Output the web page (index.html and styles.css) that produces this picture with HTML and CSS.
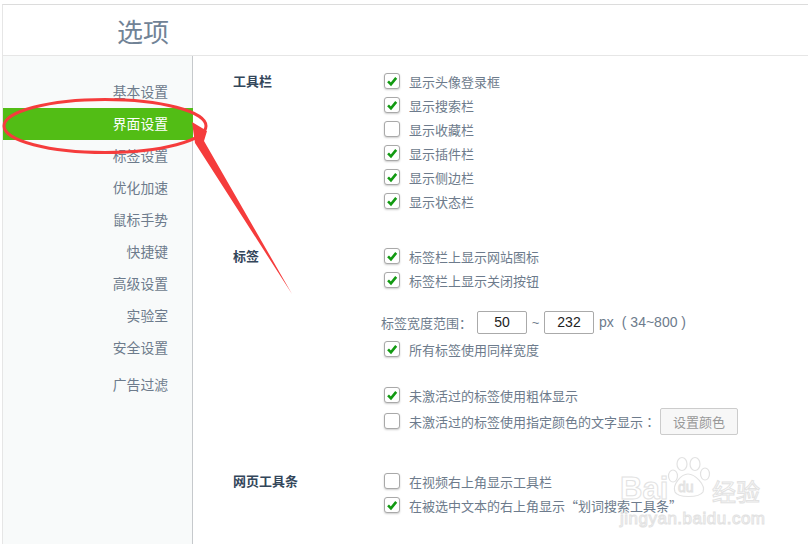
FILE: index.html
```html
<!DOCTYPE html>
<html lang="zh-CN">
<head>
  <meta charset="UTF-8">
  <title>选项</title>
  <link rel="stylesheet" href="styles.css">
</head>
<body>
  <div class="outer">
    <div class="header">
      <h1>选项</h1>
    </div>
    <div class="content">
      <div class="side">
        <div class="item">基本设置</div>
        <div class="item active">界面设置</div>
        <div class="item">标签设置</div>
        <div class="item">优化加速</div>
        <div class="item">鼠标手势</div>
        <div class="item">快捷键</div>
        <div class="item">高级设置</div>
        <div class="item">实验室</div>
        <div class="item">安全设置</div>
        <div class="item last">广告过滤</div>
      </div>
      <div class="main">
        <div class="section">
          <div class="title">工具栏</div>
          <div class="rows">
            <div class="row"><span class="box on"><svg viewBox="0 0 16 16"><path d="M3.5 8.5 6.8 11.8 12.8 4.5"/></svg></span>显示头像登录框</div>
            <div class="row"><span class="box on"><svg viewBox="0 0 16 16"><path d="M3.5 8.5 6.8 11.8 12.8 4.5"/></svg></span>显示搜索栏</div>
            <div class="row"><span class="box"></span>显示收藏栏</div>
            <div class="row"><span class="box on"><svg viewBox="0 0 16 16"><path d="M3.5 8.5 6.8 11.8 12.8 4.5"/></svg></span>显示插件栏</div>
            <div class="row"><span class="box on"><svg viewBox="0 0 16 16"><path d="M3.5 8.5 6.8 11.8 12.8 4.5"/></svg></span>显示侧边栏</div>
            <div class="row"><span class="box on"><svg viewBox="0 0 16 16"><path d="M3.5 8.5 6.8 11.8 12.8 4.5"/></svg></span>显示状态栏</div>
          </div>
        </div>
        <div class="section tabs">
          <div class="title">标签</div>
          <div class="rows">
            <div class="row"><span class="box on"><svg viewBox="0 0 16 16"><path d="M3.5 8.5 6.8 11.8 12.8 4.5"/></svg></span>标签栏上显示网站图标</div>
            <div class="row"><span class="box on"><svg viewBox="0 0 16 16"><path d="M3.5 8.5 6.8 11.8 12.8 4.5"/></svg></span>标签栏上显示关闭按钮</div>
            <div class="width-row">
              <span class="width-label">标签宽度范围<span class="colon">：</span></span>
              <span class="num">50</span>
              <span class="tilde">~</span>
              <span class="num">232</span>
              <span class="unit">px</span>
              <span class="range">( 34~800 )</span>
            </div>
            <div class="row"><span class="box on"><svg viewBox="0 0 16 16"><path d="M3.5 8.5 6.8 11.8 12.8 4.5"/></svg></span>所有标签使用同样宽度</div>
            <div class="row push"><span class="box on"><svg viewBox="0 0 16 16"><path d="M3.5 8.5 6.8 11.8 12.8 4.5"/></svg></span>未激活过的标签使用粗体显示</div>
            <div class="row color-row"><span class="box"></span>未激活过的标签使用指定颜色的文字显示<span class="colon">：</span><span class="btn">设置颜色</span></div>
          </div>
        </div>
        <div class="section bar">
          <div class="title">网页工具条</div>
          <div class="rows">
            <div class="row"><span class="box"></span>在视频右上角显示工具栏</div>
            <div class="row"><span class="box on"><svg viewBox="0 0 16 16"><path d="M3.5 8.5 6.8 11.8 12.8 4.5"/></svg></span>在被选中文本的右上角显示“划词搜索工具条”</div>
          </div>
        </div>
      </div>
    </div>
  </div>

  <!-- red marks drawn over the screenshot -->
  <svg class="marks" width="808" height="544" viewBox="0 0 808 544">
    <ellipse cx="105" cy="126" rx="101" ry="26.500" fill="none" stroke="#f53c3c" stroke-width="3"/>
    <path d="M192 122 207 131 204 141 292 294 195 143 Z" fill="#f53c3c"/>
  </svg>

  <div class="mark">
    <svg class="paw" viewBox="0 0 44 44" width="44" height="44">
      <ellipse cx="6" cy="20" rx="4.500" ry="6"/>
      <ellipse cx="15" cy="8" rx="5" ry="6.500"/>
      <ellipse cx="28" cy="8" rx="5" ry="6.500"/>
      <ellipse cx="38" cy="18" rx="4.500" ry="6"/>
      <path d="M21 18C14 18 5 29 8 36 11 42 32 42 36 36 39 29 28 18 21 18Z"/>
    </svg>
    <span class="bai">Bai</span><span class="du">du</span><span class="jy">经验</span>
    <div class="url">jingyan.baidu.com</div>
  </div>
</body>
</html>
```

FILE: styles.css
```css
* {
  box-sizing: border-box;
}

html, body {
  margin: 0;
  height: 100%;
  background: #fff;
  overflow: hidden;
}

body {
  font-family: "Noto Sans CJK SC", "Liberation Sans", sans-serif;
  font-size: 13px;
  color: #6d7b8c;
}

.outer {
  height: 544px;
  margin: 4px 0 0 2px;
  border-top: 1px solid #dcdcdc;
  border-left: 1px solid #e6e6e6;
  display: flex;
  flex-direction: column;
}

.header {
  height: 51px;
  flex: none;
  border-bottom: 1px solid #e6e6e6;
  padding-left: 114px;
}

.header h1 {
  margin: 0;
  font-size: 26px;
  font-weight: 400;
  line-height: 51px;
  color: #718396;
}

.content {
  display: flex;
  flex: 1;
}

.side {
  width: 190px;
  flex: none;
  padding-top: 20px;
  background: #f8fafa;
  border-right: 1px solid #c6c9cc;
}

.item {
  height: 32px;
  line-height: 30px;
  padding-right: 24px;
  text-align: right;
  font-size: 13.800px;
  color: #6d7b8c;
}

.item.active {
  background: #52bd15;
  color: #fff;
  margin-right: -1px;
  padding-right: 25px;
}

.item.last {
  margin-top: 5px;
}

.main {
  flex: 1;
  padding: 13px 0 0 40px;
}

.section {
  display: flex;
}

.section.tabs {
  margin-top: 31px;
}

.section.bar {
  margin-top: 34px;
}

.title {
  width: 151px;
  flex: none;
  line-height: 24px;
  font-weight: 700;
  color: #33465a;
}

.row {
  display: flex;
  align-items: center;
  height: 24px;
}

.row.push {
  margin-top: 22px;
}

.row.color-row {
  height: 28px;
}

.colon {
  font-family: "Noto Sans CJK TC", sans-serif;
}

.box {
  width: 16px;
  height: 16px;
  flex: none;
  margin-right: 9px;
  background: #fff;
  border: 1px solid #a9a9a9;
  border-radius: 3px;
  box-shadow: 0 1px 2px rgba(0, 0, 0, .2);
}

.box svg {
  display: block;
  width: 14px;
  height: 14px;
}

.box path {
  fill: none;
  stroke: #129a12;
  stroke-width: 3;
}

.width-row {
  display: flex;
  align-items: center;
  height: 24px;
  margin: 18px 0 3px -3px;
}

.width-label {
  width: 96px;
}

.num {
  width: 50px;
  height: 23px;
  border: 1px solid #aaa;
  border-radius: 2px;
  line-height: 21px;
  text-align: center;
  font-family: "Liberation Sans", sans-serif;
  font-size: 14px;
  color: #222;
}

.tilde {
  width: 17px;
  text-align: center;
  font-family: "Liberation Sans", sans-serif;
}

.unit,
.range {
  font-family: "Liberation Sans", sans-serif;
  font-size: 14px;
}

.unit {
  margin-left: 5px;
}

.range {
  margin-left: 8px;
}

.btn {
  width: 78px;
  height: 27px;
  margin-left: 4px;
  background: #f7f7f7;
  border: 1px solid #ccc;
  border-radius: 2px;
  line-height: 25px;
  text-align: center;
  color: #999;
}

.marks {
  position: absolute;
  left: 0;
  top: 0;
  pointer-events: none;
}

.mark {
  position: absolute;
  left: 620px;
  top: 456px;
  width: 188px;
  height: 72px;
  color: #fff;
  -webkit-text-stroke: 1px #e2e2e2;
}

.paw {
  position: absolute;
  left: 47px;
  top: 0;
  fill: none;
  stroke: #e2e2e2;
  stroke-width: 1.200;
}

.bai {
  position: absolute;
  left: 0;
  top: 22px;
  font: 700 31px/22px "Liberation Sans", sans-serif;
}

.du {
  position: absolute;
  left: 58px;
  top: 24px;
  font: 400 14px/14px "Liberation Sans", sans-serif;
}

.jy {
  position: absolute;
  left: 92px;
  top: 22px;
  font-size: 24px;
  line-height: 26px;
}

.url {
  position: absolute;
  left: 0;
  top: 54px;
  font: 400 17px/18px "Liberation Sans", sans-serif;
  letter-spacing: .5px;
}
```
